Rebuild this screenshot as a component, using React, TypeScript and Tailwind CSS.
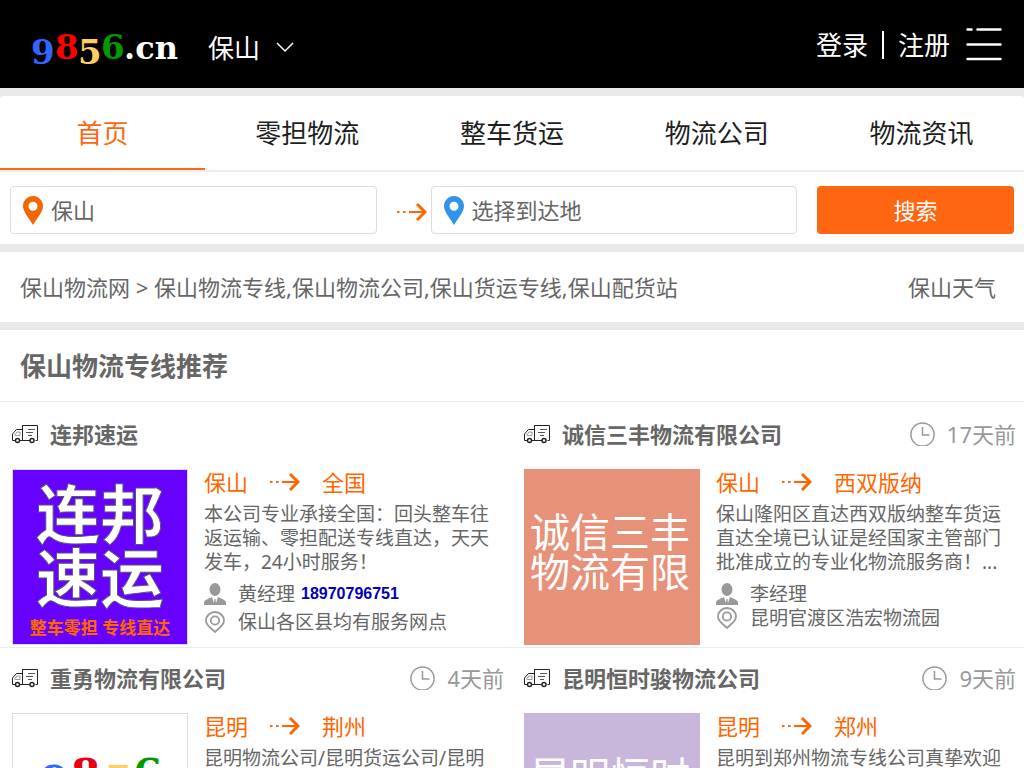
import { clsx } from "clsx";
import type { ReactNode } from "react";

const navItems = ["首页", "零担物流", "整车货运", "物流公司", "物流资讯"];

type Line = {
  company: string;
  time?: string;
  from: string;
  to: string;
  description: string;
  contact?: string;
  phone?: string;
  address?: string;
  tile: ReactNode;
};

function TruckIcon() {
  return (
    <svg width="26" height="19" viewBox="0 0 26 19" fill="none" stroke="#222" className="shrink-0" aria-hidden="true">
      <path d="M10 .5h15.500v15h-2M10.500.5v15M18 15.500H7M3 15.500H.5V9l4-4.500h6" />
      <path d="M3 9.500l2-2.500h3v3.500H3z" stroke="#999" />
      <path d="M16 4.500h7M14 7.500h7M16 10.500h4" stroke="#555" />
      <circle cx="5.500" cy="15.500" r="2" strokeWidth="1.500" />
      <circle cx="20" cy="15.500" r="2" strokeWidth="1.500" />
    </svg>
  );
}

function RouteArrow() {
  return (
    <svg width="30" height="18" viewBox="0 0 30 18" fill="none" stroke="#ff6600" strokeWidth="2" className="shrink-0" aria-hidden="true">
      <path d="M0 9h2.500M6 9h2.500M12 9h17" />
      <path d="M20 1l8 8-8 8" strokeWidth="3" />
    </svg>
  );
}

function PinIcon({ className }: { className: string }) {
  return (
    <svg width="20" height="29" viewBox="0 0 20 29" className={clsx("shrink-0", className)} fill="currentColor" fillRule="evenodd" aria-hidden="true">
      <path d="M10 0C4.500 0 0 4.500 0 10c0 6 6 12 10 19 4-7 10-13 10-19C20 4.500 15.500 0 10 0zm0 5.800a4.500 4.500 0 1 1 0 9 4.500 4.500 0 0 1 0-9z" />
    </svg>
  );
}

function ClockIcon() {
  return (
    <svg width="25" height="24" viewBox="0 0 25 24" fill="none" stroke="#999" strokeWidth="1.500" aria-hidden="true">
      <circle cx="12.500" cy="12.500" r="11.600" />
      <path d="M12.500 5v8h7" />
    </svg>
  );
}

function PersonIcon() {
  return (
    <svg width="22" height="22" viewBox="0 0 22 22" fill="#999" className="shrink-0" aria-hidden="true">
      <ellipse cx="11" cy="6.500" rx="5.500" ry="6.500" />
      <path d="M0 22v-2.500C0 17 4.500 16 8 14l2 6 .5-4h1l.5 4 2-6c3.500 2 8 3 8 5.500V22z" />
    </svg>
  );
}

function PlaceIcon() {
  return (
    <svg width="22" height="22" viewBox="0 0 22 22" fill="none" stroke="#999" strokeWidth="1.800" className="shrink-0" aria-hidden="true">
      <path d="M11 21c-3-3.500-9-6-9-11.500a9 8.500 0 0 1 18 0c0 5.500-6 8-9 11.500z" />
      <circle cx="11" cy="9.500" r="4.200" />
    </svg>
  );
}

function Logo() {
  return (
    <svg width="152" height="64" viewBox="0 0 152 64" className="block" fontFamily="'DejaVu Serif', serif" fontWeight="bold" fontSize="34" role="img" aria-label="9856.cn">
      <text x="-1" y="52" fill="#3366ff">9</text>
      <text x="23" y="47" fill="#ff0000">8</text>
      <text x="46" y="52" fill="#ffcc66">5</text>
      <text x="69" y="47" fill="#009900">6</text>
      <text x="92" y="47" fontSize="32" fill="#fff">.cn</text>
    </svg>
  );
}

function LogoTile() {
  return (
    <div className="flex size-44 items-center justify-center border border-[#ddd]">
      <svg width="150" height="96" viewBox="0 0 150 96" fontFamily="'DejaVu Serif', serif" fontWeight="bold" fontSize="42" role="img" aria-label="9856">
        <text x="15" y="43" fill="#3366ff">9</text>
        <text x="46" y="36" fill="#e60012">8</text>
        <text x="79" y="43" fill="#ffcc66">5</text>
        <text x="108" y="36" fill="#009900">6</text>
      </svg>
    </div>
  );
}

function TextTile({ text, className }: { text: string; className: string }) {
  return (
    <div className={clsx("size-44 px-1.5 pt-[43px] text-[40px] leading-10 text-white", className)}>
      <p className="w-40 break-all">{text}</p>
    </div>
  );
}

const lines: Line[] = [
  {
    company: "连邦速运",
    from: "保山",
    to: "全国",
    description: "本公司专业承接全国：回头整车往返运输、零担配送专线直达，天天发车，24小时服务！",
    contact: "黄经理",
    phone: "18970796751",
    address: "保山各区县均有服务网点",
    tile: (
      <div className="flex size-44 flex-col items-center border border-[#ddd] bg-[#6600ff] pt-3 font-bold">
        <span className="w-32 text-[64px] leading-16 text-white [-webkit-text-stroke:1px_#555577]">连邦速运</span>
        <span className="mt-1.5 text-[17px] leading-6 text-[#ff6600]">整车零担 专线直达</span>
      </div>
    ),
  },
  {
    company: "诚信三丰物流有限公司",
    time: "17天前",
    from: "保山",
    to: "西双版纳",
    description: "保山隆阳区直达西双版纳整车货运直达全境已认证是经国家主管部门批准成立的专业化物流服务商！...",
    contact: "李经理",
    address: "昆明官渡区浩宏物流园",
    tile: <TextTile text="诚信三丰物流有限" className="bg-[#e79178]" />,
  },
  {
    company: "重勇物流有限公司",
    time: "4天前",
    from: "昆明",
    to: "荆州",
    description: "昆明物流公司/昆明货运公司/昆明",
    tile: <LogoTile />,
  },
  {
    company: "昆明恒时骏物流公司",
    time: "9天前",
    from: "昆明",
    to: "郑州",
    description: "昆明到郑州物流专线公司真挚欢迎",
    tile: <TextTile text="昆明恒时" className="bg-[#c8b7da]" />,
  },
];

function LineCard({ line }: { line: Line }) {
  return (
    <li className="border-b border-[#eaeaea] pb-0.5">
      <div className="flex h-[60px] items-center pr-2 pl-3">
        <TruckIcon />
        <h3 className="ml-3 flex-1 truncate text-[22px] font-bold">{line.company}</h3>
        {line.time && (
          <div className="flex items-center gap-3 text-[22px] text-[#999]">
            <ClockIcon />
            <time>{line.time}</time>
          </div>
        )}
      </div>
      <div className="flex gap-4 px-3 pt-[5px]">
        <a href="#" className="shrink-0">
          {line.tile}
        </a>
        <div className="min-w-0 flex-1">
          <a href="#" className="flex h-[26px] items-center gap-[22px] text-[22px] text-[#ff6600]">
            <span>{line.from}</span>
            <RouteArrow />
            <span>{line.to}</span>
          </a>
          <p className="mt-[7px] line-clamp-3 text-[19px] leading-6">{line.description}</p>
          {line.contact && (
            <div className={clsx("mt-2 flex items-center gap-3 text-[19px] leading-6", line.phone && "mb-1")}>
              <PersonIcon />
              <div className="flex items-center gap-1.5">
                <span>{line.contact}</span>
                {line.phone && (
                  <a href="#" className="font-['Liberation_Sans',sans-serif] text-base font-bold text-[#0000bb]">
                    {line.phone}
                  </a>
                )}
              </div>
            </div>
          )}
          {line.address && (
            <div className="flex items-center gap-3 text-[19px] leading-6">
              <PlaceIcon />
              <span className="truncate">{line.address}</span>
            </div>
          )}
        </div>
      </div>
    </li>
  );
}

export default function App() {
  return (
    <div className="h-screen overflow-hidden bg-white font-['Noto_Sans','Noto_Sans_CJK_SC',sans-serif] text-[#666]" lang="zh-CN">
      <header className="flex h-[88px] items-center bg-black pr-[22px] pl-8 text-[26px] text-white">
        <a href="#">
          <Logo />
        </a>
        <button type="button" className="ml-6 flex items-center gap-4 pt-2">
          保山
          <svg width="18" height="12" viewBox="0 0 18 12" fill="none" stroke="#fff" strokeWidth="1.500" aria-hidden="true">
            <path d="M1 1l8 8 8-8" />
          </svg>
        </button>
        <div className="ml-auto flex items-center gap-4 pt-0.5">
          <div className="flex items-center gap-3.5">
            <a href="#">登录</a>
            <span className="h-7 w-0.5 bg-white" />
            <a href="#">注册</a>
          </div>
          <button type="button" aria-label="菜单">
            <svg width="36" height="34" viewBox="0 0 36 34" fill="none" stroke="#fff" strokeWidth="2.500" strokeLinecap="round" aria-hidden="true">
              <path d="M1.500 1.500h4M11.500 1.500h23M1.500 16.500h33M1.500 31h33" />
            </svg>
          </button>
        </div>
      </header>

      <div className="bg-[#eaeaea] pt-2">
        <nav className="grid grid-cols-5 rounded-t border-b-2 border-[#eeeef2] bg-white text-[26px] text-[#1e1e1e]">
          {navItems.map((item, i) => (
            <a
              key={item}
              href="#"
              className={clsx(
                "flex h-[74px] items-center justify-center border-b-2 pt-0.5",
                i === 0 ? "border-[#ff6611] text-[#ff6611]" : "border-transparent",
              )}
            >
              {item}
            </a>
          ))}
        </nav>
      </div>

      <form className="flex items-center border-b-8 border-[#eaeaea] px-2.5 pt-3.5 pb-2.5 text-[22px]">
        <label className="flex h-12 min-w-0 flex-1 items-center gap-2 rounded-sm border border-[#ddd] pl-3">
          <PinIcon className="text-[#f56600]" />
          <input aria-label="出发地" defaultValue="保山" className="w-full min-w-0 outline-none" />
        </label>
        <span className="mr-1 ml-5 pt-1">
          <RouteArrow />
        </span>
        <label className="flex h-12 min-w-0 flex-1 items-center gap-2 rounded-sm border border-[#ddd] pl-3">
          <PinIcon className="text-[#3194eb]" />
          <input aria-label="到达地" placeholder="选择到达地" className="w-full min-w-0 outline-none placeholder:text-[#666]" />
        </label>
        <button type="button" className="ml-5 h-12 w-[197px] rounded bg-[#ff6611] text-white">
          搜索
        </button>
      </form>

      <div className="flex h-[78px] items-center justify-between border-b-8 border-[#eaeaea] pr-7 pl-5 text-[22px]">
        <p>
          <a href="#">保山物流网</a> &gt; 保山物流专线,保山物流公司,保山货运专线,保山配货站
        </p>
        <a href="#">保山天气</a>
      </div>

      <main>
        <h2 className="flex h-[72px] items-center border-b border-[#eaeaea] px-5 pt-0.5 text-[26px] font-bold">保山物流专线推荐</h2>
        <ul className="grid grid-cols-2 pt-0.5">
          {lines.map((line) => (
            <LineCard key={line.company} line={line} />
          ))}
        </ul>
      </main>
    </div>
  );
}
